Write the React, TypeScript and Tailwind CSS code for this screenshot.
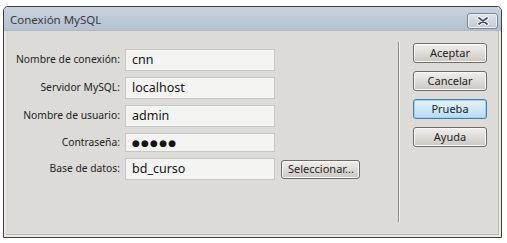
import React from 'react'

const font = { fontFamily: '"Noto Sans", "DejaVu Sans", sans-serif' }

const fields = [
  { label: 'Nombre de conexión:', value: 'cnn' },
  { label: 'Servidor MySQL:', value: 'localhost' },
  { label: 'Nombre de usuario:', value: 'admin' },
  { label: 'Contraseña:', value: '●●●●●', secret: true },
  { label: 'Base de datos:', value: 'bd_curso', select: true },
]

const DlgButton: React.FC<{ children: React.ReactNode; focused?: boolean; className?: string }> = ({
  children,
  focused,
  className,
}) => (
  <div
    className={
      'flex items-center justify-center rounded-[3px] border text-[11px] text-[#1e1e1e] ' +
      (focused
        ? 'border-[#3c7fb1] bg-gradient-to-b from-[#e6f2fb] to-[#b9dbf3] shadow-[inset_0_0_0_1px_#9fd2f0] '
        : 'border-[#6f6b66] bg-gradient-to-b from-[#f2f0ee] to-[#cbc7c2] shadow-[inset_0_0_0_1px_#faf9f8] ') +
      (className || '')
    }
  >
    {children}
  </div>
)

export default function App() {
  return (
    <div className="w-[507px] h-[243px] bg-white pl-[3px] pt-[6px]" style={font}>
      <div className="w-[499px] h-[232px] flex flex-col border border-[#3f3f3f] rounded-t-[5px] overflow-hidden bg-[#dddbd8]">
        {/* title bar */}
        <div className="h-[24px] flex items-center justify-between bg-gradient-to-b from-[#c8d2de] to-[#b5c1cf] pl-[6px] pr-[3px] border-b border-[#aeb7c2]">
          <span className="text-[11.5px] text-[#3a3a3a] pt-[2px]">Conexión MySQL</span>
          <div className="w-[31px] h-[16px] mt-[4px] flex items-center justify-center rounded-[3px] border border-[#7a8493] bg-gradient-to-b from-[#dfe4eb] to-[#c1c9d4] shadow-[inset_0_0_0_1px_#eef1f5]">
            <svg width="14" height="10" viewBox="0 0 14 10">
              <path d="M3 2 L11 8 M11 2 L3 8" stroke="#ffffff" strokeWidth="3.6" strokeLinecap="round" />
              <path d="M3 2 L11 8 M11 2 L3 8" stroke="#4a4f57" strokeWidth="1.8" strokeLinecap="round" />
            </svg>
          </div>
        </div>

        {/* body */}
        <div className="flex-1 flex border-[2px] border-t-0 border-[#e9e8e6] shadow-[inset_-1px_-1px_0_#bdbab6]">
          <div className="w-[392px] flex flex-col gap-[6px] pt-[18px]">
            {fields.map(f => (
              <div key={f.label} className={'flex items-center ' + (f.secret ? 'h-[19px]' : 'h-[22px]')}>
                <div className="w-[114px] text-right text-[10.3px] text-[#222] whitespace-nowrap">{f.label}</div>
                <div
                  className={
                    'ml-[5px] w-[150px] flex items-center pl-[6px] bg-[#f4f4f3] border border-[#c9c7c4] text-[12.5px] text-[#141414] ' +
                    (f.secret ? 'h-[19px]' : 'h-[22px]')
                  }
                >
                  {f.secret ? <span className="text-[9px] tracking-[1.2px]">{f.value}</span> : f.value}
                </div>
                {f.select && (
                  <DlgButton className="ml-[6px] w-[79px] h-[19px] justify-start pl-[6px] text-[11.5px]">
                    Seleccionar...
                  </DlgButton>
                )}
              </div>
            ))}
          </div>

          <div className="mt-[11px] h-[180px] w-[2px] border-l border-[#8c8985] bg-[#f7f6f5]" />

          <div className="flex flex-col gap-[8px] pl-[13px] pt-[12px]">
            <DlgButton className="w-[74px] h-[20px]">Aceptar</DlgButton>
            <DlgButton className="w-[74px] h-[20px]">Cancelar</DlgButton>
            <DlgButton className="w-[74px] h-[20px]" focused>
              Prueba
            </DlgButton>
            <DlgButton className="w-[74px] h-[20px]">Ayuda</DlgButton>
          </div>
        </div>
      </div>
    </div>
  )
}
